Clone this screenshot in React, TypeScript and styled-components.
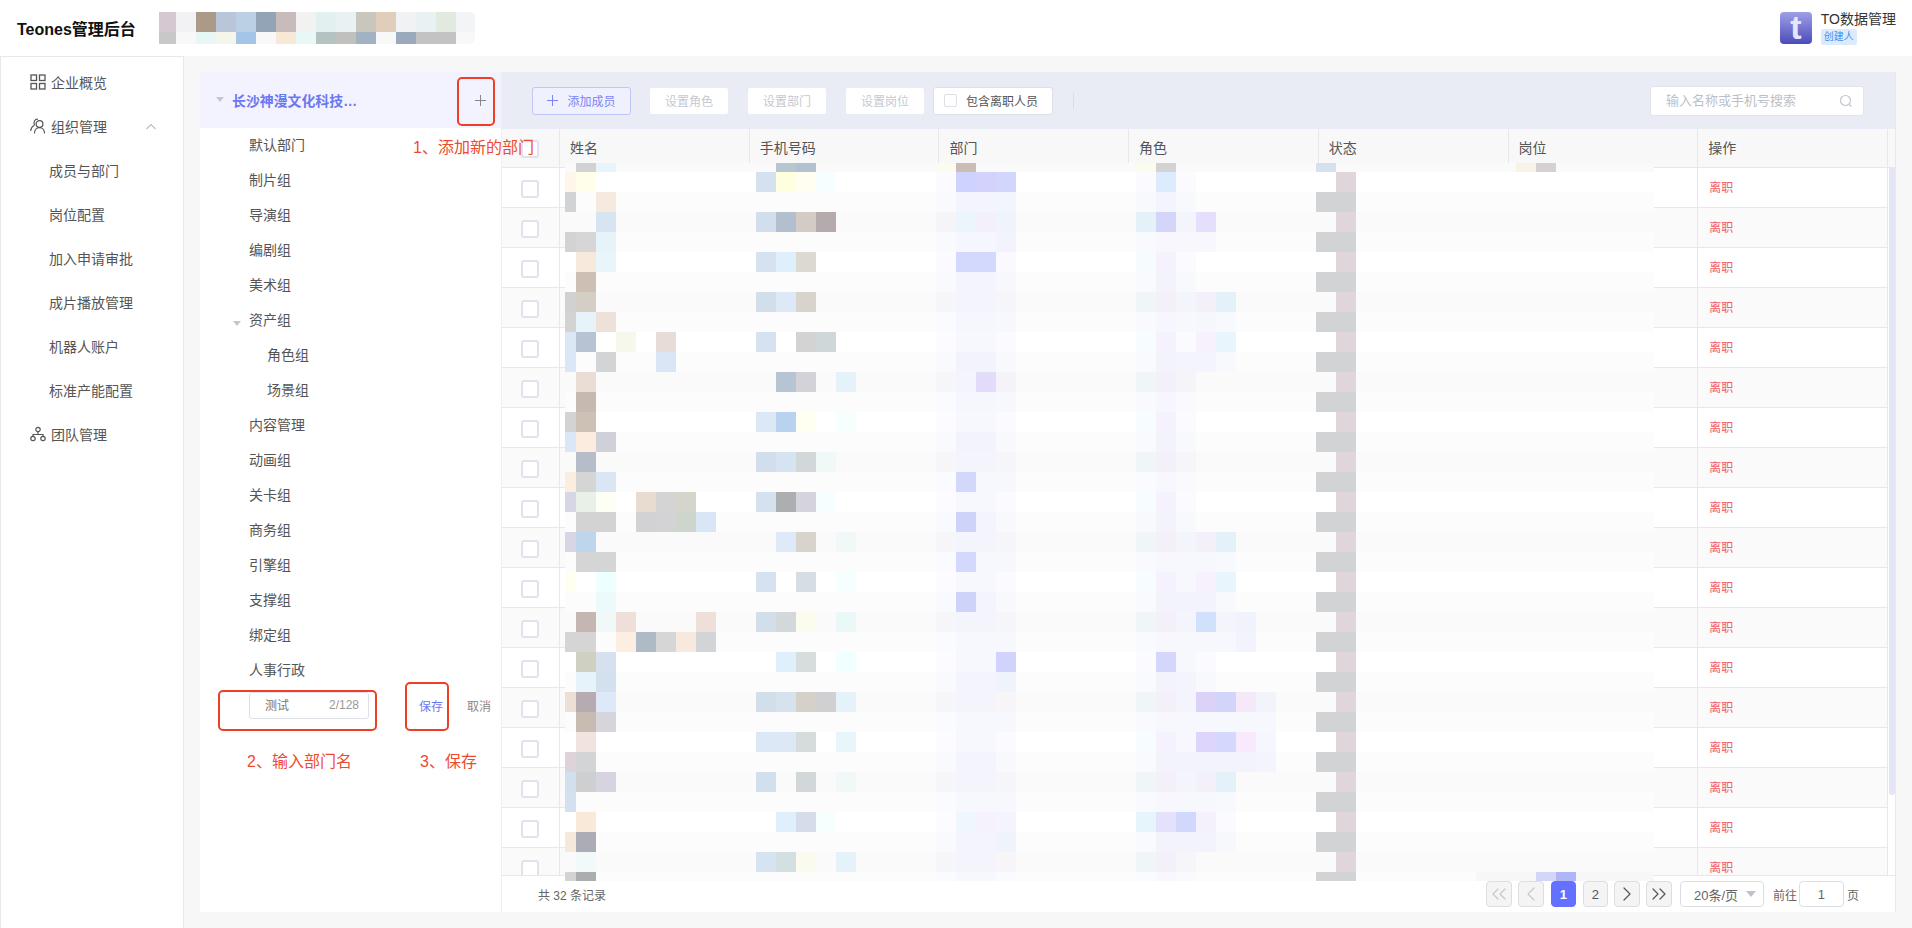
import styled, { createGlobalStyle } from 'styled-components';
import { ChevronLeft, ChevronRight, ChevronsLeft, ChevronsRight } from 'lucide-react';

const GlobalStyle = createGlobalStyle`
  html, body { margin: 0; padding: 0; background: #f7f7f7; }
  * { box-sizing: border-box; }
  body { font-family: "Liberation Sans", "Noto Sans CJK SC", sans-serif; color: #555; }
`;

// 打码区域：r -> "列:颜色" 列表，列号可写范围
const BLUR_ROWS: string[] = [
  '1:d2d2d2 2:e8f4fb 11:b8c6cf 12:b2c0d0 19:fcfcee 20:ccbcb6 29:fcfcee 30:d3d3d3 38:d5e1ee 48:f9f3e7 49:d5d0d2',
  '0:fff6ea 1:fffeea 10:d5e1ee 11:ffffe0 12:fffef0 13:f6ffff 19:fbfaff 20:cdd3fc 21:d3d2fc 22:d2d5fc 29:fafaff 30:dcebfd 31:fbfbff',
  '0:d2d3d5 2:f6e9dd 19:f8fafe 20-21:f3f4fd 22:f2f5fc 29:f8f9fd 30:f3f4fd 31:f8f9fd',
  '2:d7e4f1 10:d2deeb 11:b1bfce 12:d3cbc6 13:b5aaac 19:f5f5f8 20:ecf5fb 21:f3f0fa 22:eff3fb 29:e5f1f9 30:d5d5f9 31:f4f4fd 32:e6dffc',
  '0:d3d3d3 1:d8d5d7 2:e6f3f9 19:f8fafe 20-21:f6f7fe 22:f3f3fd 29:f8fafe 30-32:f7f7fd',
  '1:f8e9dd 2:e8f6fc 10:d6e2ef 11:e0effc 12:dcd8d2 19:fbfaff 20-21:d3d9fc 22:fbf9ff 29:f6fbfe 30:f5f1fd 31:fbfaff',
  '1:cdbfb4 19:f8fafd 20-21:f3f4fd 22:f6f8fd 29:f8fafd 30:f3f3fc 31:f8f9fc',
  '0:d0d1d2 1:d4cfc5 10:d2dfeb 11:dde9f6 12:d8d3cc 19:f6f6f9 20-21:f3f4fc 22:f5f5fa 29:f0f6f8 30:f3f0f9 31:f4f4fc 32:f3f0f9 33:e4f1f9',
  '0:d3d3d3 1:e7f3f8 2:eee1d9 19:fafbff 20-21:f6f7fe 22:f6f8fe 29:f8fafe 30:f6f7fe 31:f7f7fe 32:f6f6fd 33:f8f9fd',
  '0:dce7f5 1:b7c3d2 2:ffffff 3:f6f8ec 5:e8dcd8 10:d6e2ef 12:d3d3d3 13:cfd7d8 19:fcfbff 20-21:f7f7fe 22:fbfaff 29:f6fcff 30:f5f1fd 31:fbfaff 32:f6f1fd 33:e8f5fd',
  '0:dbe6f6 2:d3d4d5 5:dae6f6 19:f8fafd 20-21:f2f3fd 22:f7f9fd 29:f9fafd 30:f3f3fc 31-32:f3f4fc 33:f8f9fd',
  '1:e9ddd5 11:b6c4d4 12:d2d2d8 14:e6f2f9 19:f6f6f9 20:f3f4fc 21:e2dbf9 22:f5f3f9 29:f0f6f8 30:f3f0f9 31:f5f5f9',
  '1:c6bab0 19:fafbfe 20-21:f6f7fe 22:f7f8fe 29:f8fafe 30:f6f7fe 31:f9f9fe',
  '0:d3d3d3 1:cdc0b5 10:dce8f6 11:b8d2ef 12:fefff0 14:f6fefe 19:fcfbff 20-21:f7f7fe 22:fbfaff 29:f6fcff 30:f5f1fd 31:fbfaff',
  '0:dbe6f6 1:fcece0 2:d0d1d8 19:f8fafd 20-21:f2f3fd 22:f7f9fd 29:f9fafd 30:f3f3fc 31:f8f9fc',
  '1:b6bdc9 10:d2deeb 11:d6e3f0 12:d2d8da 13:f0f9f7 19:f6f6f9 20-21:f3f4fc 22:f5f5fa 29:f0f6f8 30:f3f0f9 31:f6f6fa',
  '0:fbeee0 1:d5d5d5 2:dae6f4 19:fafbff 20:d3d8fb 21-22:f7f8fe 29:f9fbfe 30:f7f7fe 31:fafafe',
  '0:d6d6e4 1:e8f0e8 2:fefff4 4:e8dbcf 5:d4d4d4 6:d5d5cc 10:d5e1ee 11:adaeaf 12:d5d4dc 13:f6ffff 19:fcfbff 20-21:f7f7fe 22:fbfaff 29:f6fcff 30:f5f1fd 31:fbfaff',
  '1-2:d3d3d3 4:d2d2d4 5:d3d3d5 6:ced5cc 7:d9e6f6 19:f8fafd 20:cdd3f9 21:f3f4fd 22:f7f9fd 29:f8f9fd 30:f3f3fc 31:f8f9fc',
  '0:d6d6e4 1:bdd6ec 11:deeaf8 12:d8d3cc 14:f0f9f7 19:f6f6f9 20-21:f3f4fc 22:f5f5fa 29:f0f6f8 30:f3f0f9 31:f4f4fc 32:f3f0f9 33:e4f1f9',
  '1-2:d5d5d5 19:fafbff 20:d3d8fc 21-22:f7f8fe 29:f8fafe 30-32:f7f7fe 33:f8f9fd',
  '0:fffff0 2:eeffff 10:d6e2ef 12:d5dde5 14:f6ffff 19:fcfbff 20-21:f7f7fe 22:fbfaff 29:f6fcff 30:f5f1fd 31:f8f7fe 32:f6f1fd 33:e8f5fd',
  '2:ecfafc 19:f8fafd 20:ced3f9 21:f3f4fd 22:f7f9fd 29:f9fafd 30-32:f3f3fc 33:f8f9fd',
  '1:c5b6b1 2:f0f9f8 3:eee0d8 7:eee0d8 10:d2dfeb 11:d3d8da 12:fbfbee 14:eaf8f8 19:f6f6f9 20-21:f3f4fc 22:f5f5fa 29:f0f6f8 30:f3f0f9 31:f4f4fc 32:d1e0fb 33:f3f4fc 34:f0f3fb',
  '0-1:d5d5d5 3:fcefe2 4:aebac5 5:d6d6d6 6:f7e9dd 7:d3d4d7 19:f9fbff 20-22:f7f8fe 29:f8fafe 30-33:f7f7fe 34:f3f3fd',
  '1:d0d0c2 2:d5e1ef 11:e0effc 12:d7dcdc 14:f0ffff 19:fcfbff 20-21:f7f7fe 22:d1d3fc 29:fbfaff 30:d5d6fc 31:f7f7fe 32:fbfaff',
  '1:e6f3fb 2:d3e1ee 19:f8fafd 20-21:f3f4fd 22:eff3fb 29:f9fafd 30:f3f3fc 31:f3f4fc 32:f7f9fc',
  '0:ecdfd6 1:b7abb2 2:dde9f8 10:d2dfeb 11:d6e3ef 12:d6d0ca 13:d0d0d3 14:e6f2fa 19:f6f6f9 20-21:f3f4fc 22:f8f5f8 29:f0f6f8 30:f3f0f9 31:f4f4fc 32:dcd1f7 33:d2d5f9 34:f5e8f9 35:f2f4fb',
  '1:c8bbb1 2:d6d5db 19:f9fbff 20-22:f7f8fe 29:f8fafe 30-35:f7f7fe',
  '1:f0e3e0 10-11:dce8f5 12:d6dcdc 14:e8f6fc 19:fcfbff 20-21:f7f7fe 22:fbfaff 29:f6fcff 30:f5f1fd 31:f8f7fe 32:ddd5fb 33:d5d7fc 34:f8eafc 35:f6f7fe',
  '0:dfd3da 1:d3d4d5 19:f8fafd 20-21:f3f4fd 22:f7f9fd 29:f9fafd 30-34:f3f3fc 35:f3f4fc',
  '0:d2dfec 1:cdcfd0 2:d7d3df 10:d2dfec 12:d2d8da 14:f0f9f7 19:f6f6f9 20-21:f3f4fc 22:f5f5fa 29:f0f6f8 30:f3f0f9 31:f4f4fc 32:f3f0f9 33:e4f1f9',
  '0:d3e0ee 19:fafbff 20-22:f7f8fe 29:f8fafe 30-32:f7f7fe 33:f8f9fd',
  '1:f9e9d8 11:e0effc 12:d5dcea 13:f6fefe 19:fcfbff 20:eef7fd 21:f5f1fd 22:f4f4fe 29:e6f4fc 30:e3e1fb 31:d1d8fc 32:f5f1fc 33:fbfaff',
  '0:f6e8db 1:abacb5 19:f8fafd 20-21:f3f4fd 22:eff3fb 29:f9fafd 30-32:f3f3fc 33:f7f8fc',
  '1:f1faf8 10:d6e3f0 11:d3dfe0 12:fafbee 14:e6f2fa 19:f6f6f9 20-21:f3f4fc 22:f8f5f8 29:f0f6f8 30:f3f0f9 31:f6f6fa',
  '0:d3d3d3 1:abadaf 19:fafbff 20-21:f7f8fe 22:fafbff 29:f9fbfe 30:f7f7fe 31:fafafe 46-48:f7f7f7 49:d3d5f9 50:aeb6f8 51-54:f7f7f7',
];

const HEAD_TOP = ['d6c8d0', 'f2f2f4', 'ab9a88', 'b9c5d8', 'bbd0e4', '92a4b6', 'c7bbbb', 'f2f2f2', 'e2f0f0', 'e8f2f2', 'c9c6bd', 'e0ceba', 'f1f2f3', 'e9f2f2', 'e2eadf', 'f3f4f6', 'f0f1f3'];
const HEAD_BOTTOM = ['c8c8c8', 'f8f8f8', 'e8f7f6', 'f5f6ea', 'a2c5e8', 'f8f8f8', 'f8e8d6', 'e8f8f6', 'b4c3c2', 'c0c0bf', 'a2b2c2', 'f8f8f8', '9aaabc', 'c3c3c3', 'c3c3c3', 'f8f8f8', 'f0f1f3'];

const rowY = (r: number) => (r === 0 ? 0 : 9 + 20 * (r - 1));
const rowH = (r: number) => (r === 0 || r === 36 ? 9 : 20);
const colX = (c: number) => (c === 0 ? 0 : 11 + 20 * (c - 1));
const colW = (c: number) => (c === 0 ? 11 : c === 54 ? 18 : 20);
const bandColor = (r: number) => (r % 4 === 1 ? '#fff' : r % 4 === 3 || r === 0 ? '#fafafa' : '#fcfcfc');

function parseCells(line: string) {
  const cells: { c: number; color: string }[] = [];
  line.split(' ').forEach((part) => {
    const [range, color] = part.split(':');
    const [from, to] = range.split('-').map(Number);
    for (let c = from; c <= (to ?? from); c++) cells.push({ c, color: '#' + color });
  });
  return cells;
}

function BlurOverlay() {
  return (
    <BlurSvg width={1089} height={718} shapeRendering="crispEdges">
      {BLUR_ROWS.map((line, r) => (
        <g key={r}>
          <rect x={0} y={rowY(r)} width={1089} height={rowH(r)} fill={bandColor(r)} />
          {r > 0 && r % 2 === 1 && <rect x={colX(39)} y={rowY(r)} width={20} height={rowH(r)} fill="#dfd5db" />}
          {r > 0 && r % 2 === 0 && <rect x={colX(38)} y={rowY(r)} width={40} height={rowH(r)} fill="#d2d3d4" />}
          {parseCells(line).map(({ c, color }) => (
            <rect key={c} x={colX(c)} y={rowY(r)} width={colW(c)} height={rowH(r)} fill={color} />
          ))}
        </g>
      ))}
    </BlurSvg>
  );
}

function HeaderBlur() {
  const x = (i: number) => (i === 0 ? 0 : 17 + 20 * (i - 1));
  const w = (i: number) => (i === 0 ? 17 : 20);
  return (
    <HeadBlurSvg width={316} height={32} shapeRendering="crispEdges">
      {HEAD_TOP.map((c, i) => <rect key={i} x={x(i)} y={0} width={w(i)} height={20} fill={'#' + c} />)}
      {HEAD_BOTTOM.map((c, i) => <rect key={i} x={x(i)} y={20} width={w(i)} height={12} fill={'#' + c} />)}
    </HeadBlurSvg>
  );
}

const GridIcon = () => (
  <svg width="16" height="16" viewBox="0 0 16 16" fill="none" stroke="#555" strokeWidth="1.3">
    <rect x="1" y="1" width="5.5" height="5.5" />
    <rect x="9.5" y="1" width="5.5" height="5.5" />
    <rect x="1" y="9.5" width="5.5" height="5.5" />
    <rect x="9.5" y="9.5" width="5.5" height="5.5" />
  </svg>
);

const PeopleIcon = () => (
  <svg width="16" height="16" viewBox="0 0 16 16" fill="none" stroke="#555" strokeWidth="1.2" strokeLinecap="round">
    <circle cx="9.5" cy="6" r="3.4" />
    <path d="M4.5 15c0-3 2.2-5.3 5-5.3s5 2.3 5 5.3" />
    <path d="M7.5 1.2a3.5 3.5 0 0 0-3 5.3" />
    <path d="M.8 12.5c.2-2.2 1.3-4 3.2-5" />
  </svg>
);

const TeamIcon = () => (
  <svg width="16" height="16" viewBox="0 0 16 16" fill="none" stroke="#555" strokeWidth="1.2">
    <circle cx="8" cy="3.5" r="2.2" />
    <circle cx="3" cy="12.5" r="2.2" />
    <circle cx="13" cy="12.5" r="2.2" />
    <path d="M8 5.7v2.800M3 10.300V8.500h10v1.800" />
  </svg>
);

const TreeCaret = () => (
  <svg width="8" height="6" viewBox="0 0 8 6"><path d="M0 0h8L4 5z" fill="#c3c6d2" /></svg>
);

const PlusIcon = ({ color }: { color: string }) => (
  <svg width="11" height="11" viewBox="0 0 11 11" fill="none" stroke={color} strokeWidth="1">
    <path d="M5.500 0v11M0 5.500h11" />
  </svg>
);

const departments = [
  { name: '默认部门' }, { name: '制片组' }, { name: '导演组' }, { name: '编剧组' }, { name: '美术组' },
  { name: '资产组', open: true }, { name: '角色组', level: 2 }, { name: '场景组', level: 2 },
  { name: '内容管理' }, { name: '动画组' }, { name: '关卡组' }, { name: '商务组' }, { name: '引擎组' },
  { name: '支撑组' }, { name: '绑定组' }, { name: '人事行政' },
];

const columns = ['姓名', '手机号码', '部门', '角色', '状态', '岗位', '操作'];
const rows = Array.from({ length: 18 }, (_, i) => i);

export default function App() {
  return (
    <Page>
      <GlobalStyle />
      <TopBar>
        <Brand>Teones管理后台</Brand>
        <HeaderBlur />
        <Account>
          <AccountLogo>t</AccountLogo>
          <AccountInfo>
            <AccountName>TO数据管理</AccountName>
            <RoleTag>创建人</RoleTag>
          </AccountInfo>
        </Account>
      </TopBar>

      <Body>
        <SideNav>
          <NavItem><GridIcon />企业概览</NavItem>
          <NavItem>
            <PeopleIcon />组织管理
            <NavArrow width="12" height="7" viewBox="0 0 12 7" fill="none" stroke="#bbb" strokeWidth="1.1">
              <path d="M1.500 6l4.500-4.500 4.500 4.500" />
            </NavArrow>
          </NavItem>
          <SubItem>成员与部门</SubItem>
          <SubItem>岗位配置</SubItem>
          <SubItem>加入申请审批</SubItem>
          <SubItem>成片播放管理</SubItem>
          <SubItem>机器人账户</SubItem>
          <SubItem>标准产能配置</SubItem>
          <NavItem><TeamIcon />团队管理</NavItem>
        </SideNav>

        <Content>
          <TreePanel>
            <TreeHeader>
              <TreeCaret />
              <CompanyName>长沙神漫文化科技…</CompanyName>
              <AddDept><PlusIcon color="#888" /></AddDept>
            </TreeHeader>
            {departments.map((d) => (
              <TreeItem key={d.name} $level={d.level ?? 1}>
                {d.open && <TreeItemCaret><TreeCaret /></TreeItemCaret>}
                {d.name}
              </TreeItem>
            ))}
            <NewDeptRow>
              <NewDeptBox>
                <NewDeptInput value="测试" readOnly />
                <NewDeptCount>2/128</NewDeptCount>
              </NewDeptBox>
              <SaveLink>保存</SaveLink>
              <CancelLink>取消</CancelLink>
            </NewDeptRow>
          </TreePanel>

          <TablePanel>
            <Toolbar>
              <AddButton><PlusIcon color="#7a84f4" />添加成员</AddButton>
              <GhostButton>设置角色</GhostButton>
              <GhostButton>设置部门</GhostButton>
              <GhostButton>设置岗位</GhostButton>
              <IncludeLeft><SmallCheck />包含离职人员</IncludeLeft>
              <ToolDivider />
              <SearchBox>
                <SearchInput placeholder="输入名称或手机号搜索" readOnly />
                <svg width="14" height="14" viewBox="0 0 14 14" fill="none" stroke="#c4c7d0" strokeWidth="1.2">
                  <circle cx="6.500" cy="6.500" r="5" />
                  <path d="M10.500 10.500l2 2" />
                </svg>
              </SearchBox>
            </Toolbar>

            <HeadRow>
              <CheckCell><Check /></CheckCell>
              {columns.map((c) => <HeadCell key={c}>{c}</HeadCell>)}
            </HeadRow>

            <TableBody>
              <RowList>
                {rows.map((r) => (
                  <Row key={r} $alt={r % 2 === 1}>
                    <CheckCell><Check /></CheckCell>
                    <Cell /><Cell /><Cell /><Cell /><Cell /><Cell />
                    <Cell><LeaveLink>离职</LeaveLink></Cell>
                  </Row>
                ))}
              </RowList>
              <ScrollTrack><ScrollThumb /></ScrollTrack>
            </TableBody>

            <Footer>
              <TotalText>共 32 条记录</TotalText>
              <Pager>
                <PageBtn $muted><ChevronsLeft size={24} strokeWidth={1.2} /></PageBtn>
                <PageBtn $muted><ChevronLeft size={24} strokeWidth={1.2} /></PageBtn>
                <PageNumActive>1</PageNumActive>
                <PageNum>2</PageNum>
                <PageBtn><ChevronRight size={24} strokeWidth={1.2} /></PageBtn>
                <PageBtn><ChevronsRight size={24} strokeWidth={1.2} /></PageBtn>
                <SizeSelect>
                  20条/页
                  <svg width="10" height="6" viewBox="0 0 10 6"><path d="M0 0h10L5 6z" fill="#bfc2cc" /></svg>
                </SizeSelect>
                <JumpLabel>前往</JumpLabel>
                <JumpInput value="1" readOnly />
                <JumpUnit>页</JumpUnit>
              </Pager>
            </Footer>
          </TablePanel>
        </Content>
      </Body>

      <BlurOverlay />

      {/* 教程标注 */}
      <RedBox $x={457} $y={77} $w={38} $h={49} />
      <RedBox $x={218} $y={690} $w={159} $h={41} />
      <RedBox $x={405} $y={682} $w={44} $h={49} />
      <RedNote $x={413} $y={136}>1、添加新的部门</RedNote>
      <RedNote $x={247} $y={750}>2、输入部门名</RedNote>
      <RedNote $x={420} $y={750}>3、保存</RedNote>
    </Page>
  );
}

const Page = styled.div`
  position: relative;
  display: flex;
  flex-direction: column;
  width: 1912px;
  height: 928px;
  overflow: hidden;
  background: #f7f7f7;
`;

const TopBar = styled.div`
  height: 56px;
  flex: none;
  display: flex;
  align-items: center;
  padding: 0 16px 0 17px;
  background: #fff;
`;

const Brand = styled.div`
  font-size: 16px;
  font-weight: 700;
  color: #111;
  width: 142px;
`;

const HeadBlurSvg = styled.svg`
  display: block;
  border-radius: 0 5px 5px 0;
`;

const Account = styled.div`
  margin-left: auto;
  display: flex;
  gap: 9px;
`;

const AccountLogo = styled.div`
  width: 32px;
  height: 32px;
  border-radius: 4px;
  background: linear-gradient(#a0a0e6, #4b4bbb);
  color: #e6e6f8;
  font-size: 34px;
  font-weight: 700;
  line-height: 31px;
  text-align: center;
`;

const AccountInfo = styled.div`
  display: flex;
  flex-direction: column;
  align-items: flex-start;
  gap: 3px;
`;

const AccountName = styled.div`
  font-size: 14px;
  line-height: 14px;
  color: #333;
`;

const RoleTag = styled.div`
  width: 36px;
  height: 16px;
  border-radius: 2px;
  background: #dcebfc;
  color: #3c8df0;
  font-size: 10px;
  line-height: 16px;
  text-align: center;
`;

const Body = styled.div`
  flex: 1;
  display: flex;
  min-height: 0;
`;

const SideNav = styled.div`
  width: 184px;
  flex: none;
  background: #fff;
  border: 1px solid #e8e8e8;
  border-bottom: 0;
  padding-top: 4px;
`;

const NavItem = styled.div`
  position: relative;
  height: 44px;
  display: flex;
  align-items: center;
  gap: 5px;
  padding: 0 0 2px 29px;
  font-size: 14px;
  color: #555;
`;

const NavArrow = styled.svg`
  position: absolute;
  left: 144px;
  top: 18px;
`;

const SubItem = styled.div`
  height: 44px;
  display: flex;
  align-items: center;
  padding: 0 0 2px 48px;
  font-size: 14px;
  color: #555;
`;

const Content = styled.div`
  flex: 1;
  display: flex;
  min-width: 0;
  padding: 16px;
`;

const TreePanel = styled.div`
  width: 301px;
  flex: none;
  background: #fff;
`;

const TreeHeader = styled.div`
  height: 56px;
  display: flex;
  align-items: center;
  padding-left: 16px;
  background: #f3f3ff;
`;

const CompanyName = styled.div`
  margin-left: 8px;
  font-size: 13.9px;
  font-weight: 700;
  color: #6c78f2;
`;

const AddDept = styled.div`
  display: flex;
  margin-left: auto;
  margin-right: 15px;
`;

const TreeItem = styled.div<{ $level: number }>`
  position: relative;
  height: 35px;
  display: flex;
  align-items: center;
  padding: 0 0 4px ${(p) => (p.$level === 2 ? 67 : 49)}px;
  font-size: 14px;
  color: #555;
`;

const TreeItemCaret = styled.span`
  position: absolute;
  left: 33px;
  top: 11px;
`;

const NewDeptRow = styled.div`
  height: 35px;
  display: flex;
  align-items: center;
  padding-left: 49px;
  font-size: 12px;
`;

const NewDeptBox = styled.div`
  width: 120px;
  height: 27px;
  display: flex;
  align-items: center;
  justify-content: space-between;
  padding: 0 9px 2px 15px;
  border: 1px solid #dfe0e8;
  border-radius: 3px;
`;

const NewDeptInput = styled.input`
  width: 40px;
  padding: 0;
  border: 0;
  outline: 0;
  background: transparent;
  font: inherit;
  color: #777;
`;

const NewDeptCount = styled.span`
  color: #999;
`;

const SaveLink = styled.span`
  margin-left: 50px;
  color: #6c78f2;
`;

const CancelLink = styled.span`
  margin-left: 24px;
  color: #888;
`;

const TablePanel = styled.div`
  flex: 1;
  min-width: 0;
  display: flex;
  flex-direction: column;
  background: #fff;
  border-left: 1px solid #eeeef4;
  border-right: 1px solid #e8e8e8;
`;

const Toolbar = styled.div`
  height: 57px;
  flex: none;
  display: flex;
  align-items: center;
  padding: 0 31px 0 30px;
  background: #e9ecf4;
  font-size: 12px;
`;

const AddButton = styled.div`
  width: 99px;
  height: 28px;
  display: flex;
  align-items: center;
  justify-content: center;
  gap: 9px;
  margin-right: 19px;
  border: 1px solid #c0c6f5;
  border-radius: 3px;
  background: #f0f1ff;
  color: #7a84f4;
`;

const GhostButton = styled.div`
  width: 78px;
  height: 26px;
  display: flex;
  align-items: center;
  justify-content: center;
  margin-right: 20px;
  border-radius: 2px;
  background: #fff;
  color: #c5c9d3;
  &:nth-of-type(4) {
    margin-right: 9px;
  }
`;

const IncludeLeft = styled.div`
  width: 120px;
  height: 28px;
  display: flex;
  align-items: center;
  gap: 9px;
  padding-left: 10px;
  border: 1px solid #dcdfe8;
  border-radius: 3px;
  background: #fff;
  color: #555;
`;

const SmallCheck = styled.span`
  width: 13px;
  height: 13px;
  border: 1px solid #dcdfe8;
  border-radius: 2px;
`;

const ToolDivider = styled.div`
  width: 1px;
  height: 16px;
  margin-left: 20px;
  background: #d8dbe4;
`;

const SearchBox = styled.div`
  margin-left: auto;
  width: 214px;
  height: 30px;
  display: flex;
  align-items: center;
  justify-content: space-between;
  padding: 0 10px 0 15px;
  border: 1px solid #e2e4ec;
  border-radius: 3px;
  background: #fff;
`;

const SearchInput = styled.input`
  width: 160px;
  padding: 0;
  border: 0;
  outline: 0;
  background: transparent;
  font: inherit;
  font-size: 13px;
  &::placeholder {
    color: #bcbfc8;
  }
`;

const HeadRow = styled.div`
  height: 39px;
  flex: none;
  display: grid;
  grid-template-columns: 58px repeat(7, 189.71px) 1fr;
  background: #f8f8f8;
  border-bottom: 1px solid #e8e8e8;
`;

const CheckCell = styled.div`
  display: flex;
  align-items: center;
  justify-content: center;
  padding: 2px 2px 0 0;
  border-right: 1px solid #e8e8e8;
`;

const Check = styled.span`
  width: 18px;
  height: 18px;
  border: 2px solid #e0e2ec;
  border-radius: 3px;
  background: #fff;
`;

const HeadCell = styled.div`
  display: flex;
  align-items: center;
  padding: 0 0 2px 10px;
  border-right: 1px solid #e8e8e8;
  font-size: 14px;
  color: #555;
`;

const TableBody = styled.div`
  flex: 1;
  min-height: 0;
  display: flex;
  overflow: hidden;
`;

const RowList = styled.div`
  width: 1386px;
  flex: none;
`;

const Row = styled.div<{ $alt: boolean }>`
  height: 40px;
  display: grid;
  grid-template-columns: 58px repeat(7, 189.71px);
  background: ${(p) => (p.$alt ? '#fafafa' : '#fff')};
  border-bottom: 1px solid #e8e8e8;
`;

const Cell = styled.div`
  display: flex;
  align-items: center;
  padding: 0 0 3px 11px;
  border-right: 1px solid #e8e8e8;
`;

const LeaveLink = styled.span`
  font-size: 12px;
  color: #f0606a;
`;

const ScrollTrack = styled.div`
  flex: 1;
  padding-left: 1px;
`;

const ScrollThumb = styled.div`
  width: 6px;
  height: 627px;
  border-radius: 0 0 3px 3px;
  background: #e4e6f8;
`;

const Footer = styled.div`
  height: 37px;
  flex: none;
  display: flex;
  align-items: center;
  justify-content: space-between;
  padding: 0 36px;
  border-top: 1px solid #e8e8e8;
  font-size: 12px;
  color: #666;
`;

const TotalText = styled.div``;

const Pager = styled.div`
  display: flex;
  align-items: center;
`;

const PageBtn = styled.div<{ $muted?: boolean }>`
  width: 26px;
  height: 26px;
  display: flex;
  align-items: center;
  justify-content: center;
  margin-right: 6px;
  border: 1px solid #dcdee6;
  border-radius: 4px;
  background: #f4f4f4;
  color: ${(p) => (p.$muted ? '#c8c8c8' : '#555')};
`;

const PageNum = styled(PageBtn)`
  width: 25px;
  margin-right: 6px;
  font-size: 13px;
`;

const PageNumActive = styled(PageBtn)`
  width: 25px;
  margin: 0 7px 0 1px;
  border-color: #6470ff;
  background: #6470ff;
  color: #fff;
  font-size: 13px;
  font-weight: 700;
`;

const SizeSelect = styled.div`
  width: 84px;
  height: 26px;
  display: flex;
  align-items: center;
  justify-content: space-between;
  margin-left: 2px;
  padding: 0 7px 0 13px;
  border: 1px solid #dcdee6;
  border-radius: 4px;
  background: #fff;
  font-size: 13px;
`;

const JumpLabel = styled.span`
  margin-left: 9px;
`;

const JumpInput = styled.input`
  width: 45px;
  height: 26px;
  margin-left: 2px;
  padding: 0;
  border: 1px solid #dcdee6;
  border-radius: 4px;
  outline: 0;
  background: #fff;
  font: inherit;
  font-size: 13px;
  color: #666;
  text-align: center;
`;

const JumpUnit = styled.span`
  margin-left: 3px;
`;

const BlurSvg = styled.svg`
  position: absolute;
  left: 565px;
  top: 163px;
`;

const RedBox = styled.div<{ $x: number; $y: number; $w: number; $h: number }>`
  position: absolute;
  left: ${(p) => p.$x}px;
  top: ${(p) => p.$y}px;
  width: ${(p) => p.$w}px;
  height: ${(p) => p.$h}px;
  border: 2px solid #ee3f24;
  border-radius: 5px;
`;

const RedNote = styled.div<{ $x: number; $y: number }>`
  position: absolute;
  left: ${(p) => p.$x}px;
  top: ${(p) => p.$y}px;
  font-size: 16px;
  line-height: 24px;
  color: #ee4a30;
`;
